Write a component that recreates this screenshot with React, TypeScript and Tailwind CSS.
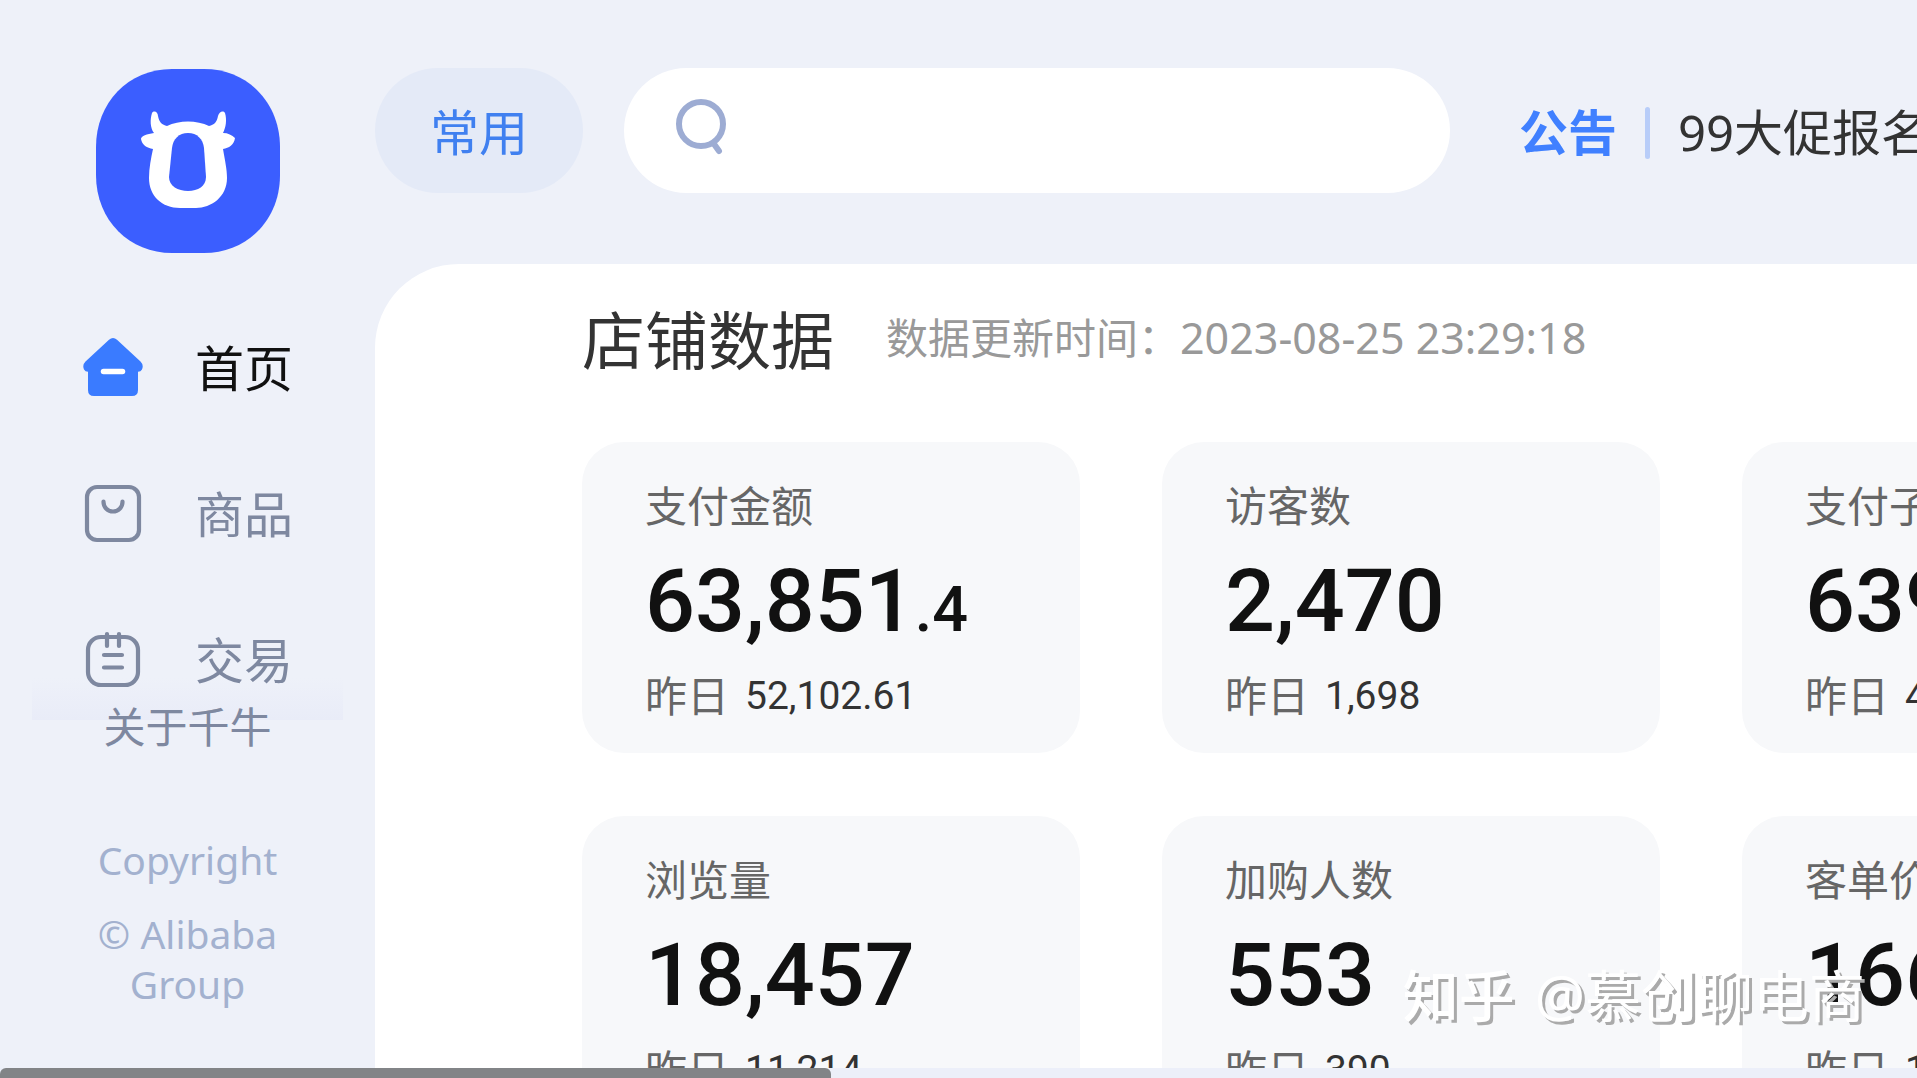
import type { ReactNode } from 'react'

interface NavItem {
  label: string
  icon: ReactNode
  active?: boolean
}

interface Stat {
  label: string
  value: string
  decimals?: string
  yesterday: string
}

function HomeIcon() {
  return (
    <svg viewBox="0 0 60 60" className="mb-1 size-15 shrink-0" aria-hidden="true">
      <path
        d="M26 2.800Q30-.8 34 2.800L57.500 24.500Q61 28 59 32.500Q57.800 34.800 55 34.800V53Q55 59 49 59H11Q5 59 5 53V34.800Q2.200 34.800 1 32.500Q-1 28 2.500 24.500Z"
        fill="#3a7bff"
      />
      <path d="M20.500 34.500H39.500" stroke="#fff" strokeWidth="5.500" strokeLinecap="round" />
    </svg>
  )
}

function GoodsIcon() {
  return (
    <svg
      viewBox="0 0 60 60"
      className="mb-1 size-15 shrink-0"
      fill="none"
      stroke="#7e88a0"
      strokeWidth="4.2"
      strokeLinecap="round"
      aria-hidden="true"
    >
      <rect x="4" y="4" width="52" height="53" rx="10" />
      <path d="M20.500 18.500V19a9.500 9.500 0 0 0 19 0V18.500" />
    </svg>
  )
}

function TradeIcon() {
  return (
    <svg
      viewBox="0 0 60 60"
      className="mb-1 size-15 shrink-0"
      fill="none"
      stroke="#7e88a0"
      strokeWidth="4.2"
      strokeLinecap="round"
      aria-hidden="true"
    >
      <rect x="5" y="8" width="50" height="48" rx="13" />
      <path d="M24 5V17M36 5V17M21 26H39M21 38.500H39" />
    </svg>
  )
}

const navItems: NavItem[] = [
  { label: '首页', icon: <HomeIcon />, active: true },
  { label: '商品', icon: <GoodsIcon /> },
  { label: '交易', icon: <TradeIcon /> },
]

const stats: Stat[] = [
  { label: '支付金额', value: '63,851', decimals: '.4', yesterday: '52,102.61' },
  { label: '访客数', value: '2,470', yesterday: '1,698' },
  { label: '支付子订单数', value: '639', yesterday: '437' },
  { label: '浏览量', value: '18,457', yesterday: '11,214' },
  { label: '加购人数', value: '553', yesterday: '390' },
  { label: '客单价', value: '166', decimals: '.28', yesterday: '158.37' },
]

function Logo() {
  return (
    <svg viewBox="0 0 184 184" className="size-46" role="img" aria-label="千牛">
      <path
        d="M76 0H108C152 0 184 34 184 78V106C184 152 150 184 108 184H76C34 184 0 152 0 106V78C0 34 32 0 76 0Z"
        fill="#3b5eff"
      />
      <path
        d="M56 44C58 41 62 43 62 47C63 53 66 56 71 57C83 51 101 51 113 57C118 56 121 53 122 47C123 43 127 41 129 44C131 51 130 58 127 64C132 64 136 66 139 69C138 76 133 79 127 80C129 92 131 100 131 109C131 128 115 139 100 139H84C66 139 53 127 53 109C53 99 55 89 57 80C51 79 46 76 45 70C45 67 51 65 58 64C54 59 54 50 56 44Z"
        fill="#fff"
      />
      <path
        d="M92 64C101 64 107 70 108 79L110 108C110 117 102 122 92 122S73 117 73 108L76 79C77 70 83 64 92 64Z"
        fill="#3b5eff"
      />
    </svg>
  )
}

function SearchIcon() {
  return (
    <svg
      viewBox="0 0 52 58"
      className="mb-2 h-[58px] w-[52px] shrink-0"
      fill="none"
      stroke="#9dacd3"
      strokeWidth="6"
      strokeLinecap="round"
      aria-hidden="true"
    >
      <circle cx="26" cy="26" r="22" />
      <path d="M39 46L44 53" />
    </svg>
  )
}

function Sidebar() {
  return (
    <aside className="flex w-[375px] shrink-0 flex-col items-center pt-[69px]">
      <Logo />
      <nav className="mt-[42px] h-[425px] self-stretch px-8">
        <ul className="h-full bg-linear-to-b from-transparent from-90% to-[#e9ecf8]">
          {navItems.map((item) => (
            <li key={item.label}>
              <a
                href="#"
                className={`flex h-[146px] items-center gap-[52px] pt-0.5 pl-[51px] text-[49px] ${
                  item.active ? 'text-[#111111]' : 'text-[#7e88a0]'
                }`}
              >
                {item.icon}
                {item.label}
              </a>
            </li>
          ))}
        </ul>
      </nav>
      <a href="#" className="-mt-[23px] text-[42px] leading-[60px] text-[#7e88a0]">
        关于千牛
      </a>
      <div className="mt-[78px] text-center text-[39px] leading-[50px] text-[#a3b1cf]">
        <p>Copyright</p>
        <p className="mt-6">
          © Alibaba
          <br />
          Group
        </p>
      </div>
    </aside>
  )
}

function Header() {
  return (
    <header className="flex h-[264px] shrink-0 items-start pt-[68px] whitespace-nowrap">
      <button
        type="button"
        className="h-[125px] w-[208px] shrink-0 rounded-full bg-[#e4eaf7] pt-1 text-[49px] text-[#4080f0]"
      >
        常用
      </button>
      <label className="ml-[41px] flex h-[125px] w-[826px] shrink-0 items-center gap-6 rounded-full bg-white px-[51px]">
        <SearchIcon />
        <input type="search" aria-label="搜索" className="min-w-0 flex-1 text-[49px] outline-none" />
      </label>
      <div className="ml-[69px] flex h-[125px] shrink-0 items-center pt-1">
        <strong className="text-[49px] font-bold text-[#4080ff]">公告</strong>
        <span className="ml-7 h-[52px] w-[5px] rounded-full bg-[#b8cdf9]" />
        <a href="#" className="ml-7 text-[49px] text-[#333333]">
          99大促报名
        </a>
      </div>
    </header>
  )
}

function StatCard({ label, value, decimals, yesterday }: Stat) {
  return (
    <li className="h-[311px] rounded-[42px] bg-[#f7f8fa] px-[63px] pt-[33px]">
      <h3 className="text-[42px] leading-[62px] text-[#666666]">{label}</h3>
      <p className="font-[Roboto] text-[88px] leading-[128px] font-medium text-[#111111]">
        {value}
        {decimals && <span className="text-[63px] leading-none">{decimals}</span>}
      </p>
      <p className="flex items-center gap-4 text-[42px] leading-[62px] text-[#666666]">
        昨日
        <span className="font-[Roboto] text-[39px] text-[#333333]">{yesterday}</span>
      </p>
    </li>
  )
}

export default function App() {
  return (
    <div className="relative flex h-screen flex-col overflow-hidden bg-[#eef1f9] font-['Noto_Sans','Noto_Sans_CJK_SC',sans-serif]">
      <div className="flex min-h-0 flex-1 overflow-hidden">
        <Sidebar />
        <div className="flex min-w-0 flex-1 flex-col overflow-hidden">
          <Header />
          <main className="flex-1 rounded-tl-[84px] bg-white pt-9 pl-[207px] whitespace-nowrap">
            <div className="flex h-20 items-center gap-[52px]">
              <h2 className="text-[63px] text-[#333333]">店铺数据</h2>
              <p className="pb-1 text-[42px] text-[#999999]">
                数据更新时间：<time className="text-[43px]">2023-08-25 23:29:18</time>
              </p>
            </div>
            <ul className="mt-[62px] grid grid-cols-[repeat(3,498px)] gap-x-[82px] gap-y-[63px]">
              {stats.map((stat) => (
                <StatCard key={stat.label} {...stat} />
              ))}
            </ul>
          </main>
        </div>
      </div>
      <div className="h-2.5 shrink-0 bg-[#eceff9]">
        <div className="h-full w-[831px] rounded-t-md bg-[#828487]" />
      </div>
      <div className="pointer-events-none absolute right-[52px] bottom-[43px] flex gap-5 text-[56px] leading-[80px] text-white [text-shadow:3px_3px_0_#aaaaaa]">
        <span className="font-medium">知乎</span>
        <span>@慕创聊电商</span>
      </div>
    </div>
  )
}
